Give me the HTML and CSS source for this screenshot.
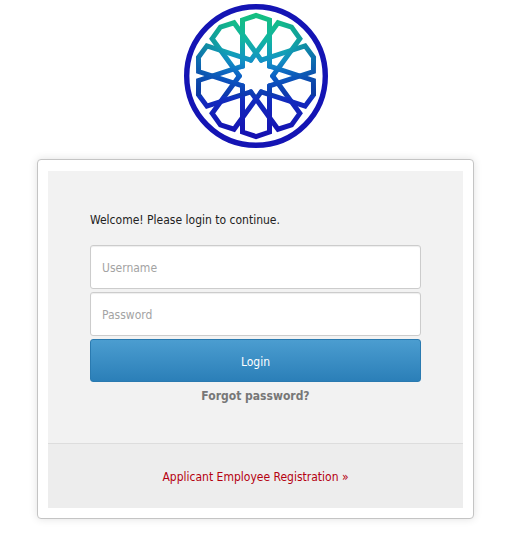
FILE: index.html
```html
<!DOCTYPE html>
<html lang="en">
<head>
  <meta charset="UTF-8">
  <meta name="viewport" content="width=device-width, initial-scale=1.0">
  <title>Login</title>
  <link rel="stylesheet" href="styles.css">
</head>
<body>
  <div class="container">
    <div class="logo">
      <svg width="144" height="144" viewBox="-72 -72 144 144" role="img" aria-label="Logo">
        <defs>
          <linearGradient id="logoFill" x1="0" y1="0" x2="0" y2="1">
            <stop offset="0" stop-color="#14c07c"/>
            <stop offset="0.22" stop-color="#12b4a2"/>
            <stop offset="0.38" stop-color="#1292c4"/>
            <stop offset="0.52" stop-color="#0c5fcc"/>
            <stop offset="0.7" stop-color="#1228bc"/>
            <stop offset="1" stop-color="#160eb0"/>
          </linearGradient>
          <radialGradient id="logoShade" gradientUnits="userSpaceOnUse" cx="0" cy="-34" r="74">
            <stop offset="0.4" stop-color="#0a3a90" stop-opacity="0"/>
            <stop offset="1" stop-color="#0a3a90" stop-opacity="0.6"/>
          </radialGradient>
          <path id="petal" d="M-13.5 -9.8V-56L0 -60.5L13.5 -56V-9.8"/>
          <mask id="rosette" maskUnits="userSpaceOnUse" x="-72" y="-72" width="144" height="144">
            <g fill="none" stroke="#fff" stroke-width="5" stroke-linecap="round">
              <use href="#petal"/>
              <use href="#petal" transform="rotate(36)"/>
              <use href="#petal" transform="rotate(72)"/>
              <use href="#petal" transform="rotate(108)"/>
              <use href="#petal" transform="rotate(144)"/>
              <use href="#petal" transform="rotate(180)"/>
              <use href="#petal" transform="rotate(216)"/>
              <use href="#petal" transform="rotate(252)"/>
              <use href="#petal" transform="rotate(288)"/>
              <use href="#petal" transform="rotate(324)"/>
            </g>
          </mask>
        </defs>
        <circle r="69.3" fill="none" stroke="#1414b4" stroke-width="5.4"/>
        <g mask="url(#rosette)">
          <rect x="-64" y="-64" width="128" height="128" fill="url(#logoFill)"/>
          <rect x="-64" y="-64" width="128" height="84" fill="url(#logoShade)"/>
        </g>
      </svg>
    </div>

    <div class="card">
      <form class="login-form">
        <p class="welcome">Welcome! Please login to continue.</p>
        <input type="text" class="field" name="username" placeholder="Username" aria-label="Username">
        <input type="password" class="field" name="password" placeholder="Password" aria-label="Password">
        <button type="submit" class="btn">Login</button>
        <a href="#" class="forgot">Forgot password?</a>
      </form>
      <div class="card-footer">
        <a href="#">Applicant Employee Registration »</a>
      </div>
    </div>
  </div>
</body>
</html>
```
FILE: styles.css
```css
* {
  box-sizing: border-box;
}

body {
  margin: 0;
  background: #fff;
  color: #222;
  font-family: "DejaVu Sans Condensed", "DejaVu Sans", Tahoma, sans-serif;
  font-stretch: condensed;
  font-size: 12px;
  line-height: 18px;
}

a {
  text-decoration: none;
}

.container {
  padding: 4px 32px 19px 37px;
}

.logo {
  display: flex;
  justify-content: center;
  margin-bottom: 11px;
}

.card {
  padding: 11px 10px 10px;
  background: #fff;
  border: 1px solid #c4c4c4;
  border-radius: 4px;
  box-shadow: 0 0 8px rgba(0, 0, 0, 0.12);
}

.login-form {
  display: flex;
  flex-direction: column;
  gap: 3px;
  padding: 40px 42px 38px;
  background: #f2f2f2;
}

.welcome {
  margin: 0 0 13px;
}

.field {
  width: 100%;
  height: 44px;
  padding: 2px 11px 0;
  border: 1px solid #ccc;
  border-radius: 3px;
  background: #fff;
  box-shadow: inset 0 1px 1px rgba(0, 0, 0, 0.07);
  color: #555;
  font: inherit;
}

.field::placeholder {
  color: #a3a3a3;
  opacity: 1;
}

.btn {
  height: 43px;
  padding: 2px 12px 0;
  border: 1px solid #2a7ab0;
  border-radius: 3px;
  background: linear-gradient(#4b9dd0, #2b7fb8);
  color: #fff;
  font: inherit;
  cursor: pointer;
}

.forgot {
  align-self: center;
  margin-top: 2px;
  color: #777;
  font-weight: bold;
}

.card-footer {
  padding: 24px 20px 22px;
  border-top: 1px solid #ddd;
  background: #ededed;
  text-align: center;
}

.card-footer a {
  color: #b50010;
}
```
